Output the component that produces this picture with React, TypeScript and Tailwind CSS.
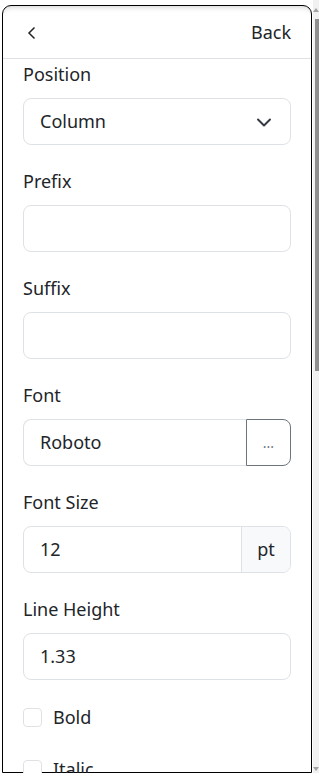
import React from "react";

const font = { fontFamily: '"Noto Sans", "Open Sans", sans-serif' };

function Label({ children }: { children: React.ReactNode }) {
  return <div className="h-[27px] leading-[27px] text-[18px] text-[#212529]">{children}</div>;
}

function Group({ label, children }: { label: string; children: React.ReactNode }) {
  return (
    <div className="flex flex-col gap-[10px] mb-[23px] shrink-0">
      <Label>{label}</Label>
      {children}
    </div>
  );
}

function TextBox({ value }: { value?: string }) {
  return (
    <div className="h-[47px] rounded-[8px] border border-[#dee2e6] bg-white px-[16px] flex items-center text-[18px] text-[#212529]">
      {value}
    </div>
  );
}

export default function App() {
  return (
    <div className="h-[773px] w-[319px] overflow-hidden bg-white relative" style={font}>
      <div className="flex h-full">
        <div className="ml-[2px] mt-[5px] w-[310px] border border-black rounded-t-[9px] bg-white flex flex-col shadow-[inset_0_6px_6px_-6px_rgba(0,0,0,0.25)]">
          <div className="h-[53px] shrink-0 border-b border-[#dee2e6] flex items-center justify-between pl-[24px] pr-[20px]">
            <svg width="10" height="14" viewBox="0 0 10 14" className="mt-[1px]">
              <path d="M7.5 1.5 L2 7 L7.5 12.5" fill="none" stroke="#212529" strokeWidth="1.5" />
            </svg>
            <span className="text-[18px] text-[#212529] leading-[27px]">Back</span>
          </div>
          <div className="px-[20px] pt-[2px] flex flex-col shrink-0">
            <Group label="Position">
              <div className="h-[47px] rounded-[8px] border border-[#dee2e6] bg-white pl-[16px] pr-[18px] flex items-center justify-between text-[18px] text-[#212529]">
                <span>Column</span>
                <svg width="16" height="12" viewBox="0 0 16 12">
                  <path d="M2 3.5 L8 9.5 L14 3.5" fill="none" stroke="#343a40" strokeWidth="2" strokeLinecap="round" strokeLinejoin="round" />
                </svg>
              </div>
            </Group>
            <Group label="Prefix">
              <TextBox />
            </Group>
            <Group label="Suffix">
              <TextBox />
            </Group>
            <Group label="Font">
              <div className="h-[47px] flex">
                <div className="flex-1 rounded-l-[8px] border border-[#dee2e6] border-r-0 px-[16px] flex items-center text-[18px] text-[#212529]">
                  Roboto
                </div>
                <div className="w-[45px] rounded-r-[8px] border border-[#6c757d] flex items-center justify-center text-[14px] text-[#6c757d]">
                  ...
                </div>
              </div>
            </Group>
            <Group label="Font Size">
              <div className="h-[47px] flex rounded-[8px] border border-[#dee2e6] overflow-hidden">
                <div className="flex-1 px-[16px] flex items-center text-[18px] text-[#212529]">12</div>
                <div className="w-[49px] border-l border-[#dee2e6] bg-[#f8f9fa] flex items-center justify-center text-[18px] text-[#212529]">
                  pt
                </div>
              </div>
            </Group>
            <Group label="Line Height">
              <TextBox value="1.33" />
            </Group>
            <div className="flex flex-col gap-[25px] mt-[1px] shrink-0">
              <div className="flex items-center gap-[11px] h-[27px]">
                <div className="w-[19px] h-[19px] rounded-[4px] border border-[#dee2e6] bg-white" />
                <span className="text-[18px] text-[#212529]">Bold</span>
              </div>
              <div className="flex items-center gap-[11px] h-[27px]">
                <div className="w-[19px] h-[19px] rounded-[4px] border border-[#dee2e6] bg-white" />
                <span className="text-[18px] text-[#212529]">Italic</span>
              </div>
            </div>
          </div>
        </div>
        <div className="ml-[1px] w-[6px] flex flex-col items-end bg-[#f1f1f1] pt-[8px]">
          <div className="w-0 h-0 border-l-[3px] border-r-[3px] border-b-[4px] border-l-transparent border-r-transparent border-b-[#a3a3a3]" />
          <div className="mt-[7px] w-[4px] h-[352px] bg-[#8f8f8f]" />
          <div className="flex-1" />
          <div className="mb-[2px] w-0 h-0 border-l-[3px] border-r-[3px] border-t-[4px] border-l-transparent border-r-transparent border-t-[#a3a3a3]" />
        </div>
      </div>
    </div>
  );
}
